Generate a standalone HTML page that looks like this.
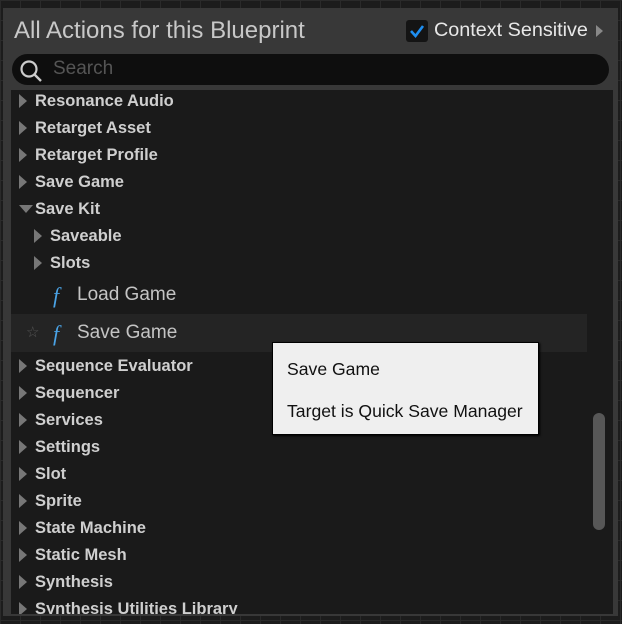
<!DOCTYPE html>
<html><head><style>
body{margin:0;width:622px;height:624px;background:#1c1c1c;position:relative;overflow:hidden;font-family:"Liberation Sans",sans-serif;}
.grid{position:absolute;inset:0;background-image:linear-gradient(90deg,#2a2a2a 1px,transparent 1px),linear-gradient(#2a2a2a 1px,transparent 1px);background-size:20px 20px;}
.panel{position:absolute;left:3px;top:8px;width:615px;height:608px;background:#383838;}
.title{position:absolute;left:14px;top:17px;font-size:24px;color:#c8c8c8;}
.cb{position:absolute;left:406px;top:20px;width:22px;height:22px;background:#141414;border-radius:3px;}
.ctx{position:absolute;left:434px;top:19px;font-size:19.8px;color:#e8e8e8;}
.arr{position:absolute;left:596px;top:25px;width:0;height:0;border-left:7px solid #888;border-top:6px solid transparent;border-bottom:6px solid transparent;}
.search{position:absolute;left:12px;top:54px;width:597px;height:31px;background:#0e0e0e;border-radius:16px;}
.search span{position:absolute;left:41px;top:4px;font-size:19px;color:#555;}
.list{position:absolute;left:11px;top:90px;width:602px;height:524px;background:#1a1a1a;overflow:hidden;}
.row{position:absolute;left:0;font-size:16.5px;font-weight:bold;color:#cfcfcf;white-space:nowrap;height:20px;}
.row i{position:absolute;left:0;top:2px;width:0;height:0;border-left:8px solid #777;border-top:7px solid transparent;border-bottom:7px solid transparent;}
.row span{position:absolute;left:16px;top:0}
.fn{position:absolute;font-size:19px;color:#c4c4c4;}
.f{position:absolute;font-family:"Liberation Serif",serif;font-style:italic;color:#4aa3e6;font-size:22px;}
.tip{position:absolute;left:272px;top:342px;width:265px;height:91px;background:#efefef;border:1px solid #000;box-shadow:1px 1px 2px #000;}
.tip div{position:absolute;left:14px;font-size:17.6px;color:#111;white-space:nowrap}
.sb{position:absolute;left:593px;top:413px;width:12px;height:117px;background:#575757;border-radius:6px;}
</style></head><body>
<div class="grid"></div>
<div class="panel"></div>
<div class="title">All Actions for this Blueprint</div>
<div class="cb"><svg width="22" height="22"><path d="M5 11 L9.5 16 L17 6" stroke="#1e8ef0" stroke-width="2.6" fill="none"/></svg></div>
<div class="ctx">Context Sensitive</div>
<div class="arr"></div>
<div class="search"><svg style="position:absolute;left:6px;top:4px" width="26" height="26"><circle cx="11" cy="11" r="7.5" stroke="#ccc" stroke-width="2.2" fill="none"/><path d="M16.5 16.5 L23 23" stroke="#ccc" stroke-width="2.4"/></svg><span>Search</span></div>
<div class="list">
<div class="row" style="top:2px;left:8px"><i></i><span>Resonance Audio</span></div>
<div class="row" style="top:29px;left:8px"><i></i><span>Retarget Asset</span></div>
<div class="row" style="top:56px;left:8px"><i></i><span>Retarget Profile</span></div>
<div class="row" style="top:83px;left:8px"><i></i><span>Save Game</span></div>
<div class="row" style="top:110px;left:8px"><i style="top:5px;border-top:8px solid #777;border-left:7px solid transparent;border-right:7px solid transparent;border-bottom:0"></i><span>Save Kit</span></div>
<div class="row" style="top:137px;left:23px"><i></i><span>Saveable</span></div>
<div class="row" style="top:164px;left:23px"><i></i><span>Slots</span></div>
<span class="f" style="left:42px;top:193px">f</span><span class="fn" style="left:66px;top:194px">Load Game</span>
<div style="position:absolute;left:0;top:224px;width:576px;height:38px;background:#242424"></div>
<span style="position:absolute;left:15px;top:233px;color:#555;font-size:15px">☆</span>
<span class="f" style="left:42px;top:231px">f</span><span class="fn" style="left:66px;top:232px">Save Game</span>
<div class="row" style="top:267px;left:8px"><i></i><span>Sequence Evaluator</span></div>
<div class="row" style="top:294px;left:8px"><i></i><span>Sequencer</span></div>
<div class="row" style="top:321px;left:8px"><i></i><span>Services</span></div>
<div class="row" style="top:348px;left:8px"><i></i><span>Settings</span></div>
<div class="row" style="top:375px;left:8px"><i></i><span>Slot</span></div>
<div class="row" style="top:402px;left:8px"><i></i><span>Sprite</span></div>
<div class="row" style="top:429px;left:8px"><i></i><span>State Machine</span></div>
<div class="row" style="top:456px;left:8px"><i></i><span>Static Mesh</span></div>
<div class="row" style="top:483px;left:8px"><i></i><span>Synthesis</span></div>
<div class="row" style="top:510px;left:8px"><i></i><span>Synthesis Utilities Library</span></div>
</div>
<div class="sb"></div>
<div class="tip"><div style="top:16px">Save Game</div><div style="top:58px">Target is Quick Save Manager</div></div>
</body></html>
